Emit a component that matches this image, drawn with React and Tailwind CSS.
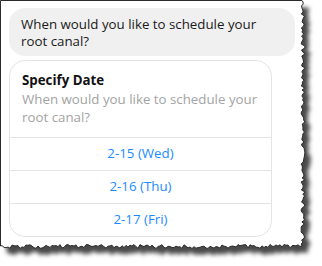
import { useMemo } from "react";

const dates = ["2-15 (Wed)", "2-16 (Thu)", "2-17 (Fri)"];

function rand(seed) {
  let s = seed;
  return () => {
    s = (s * 9301 + 49297) % 233280;
    return s / 233280;
  };
}

function tornPath() {
  const r = rand(7);
  const pts = ["M0.5 0.5", "L302 0.5"];
  for (let y = 2; y < 246; y += 2) {
    pts.push(`L${(301 + r() * 4).toFixed(1)} ${y}`);
  }
  for (let x = 302; x > 0; x -= 2) {
    pts.push(`L${x} ${(244.5 + r() * 4).toFixed(1)}`);
  }
  pts.push("L0.5 246", "Z");
  return pts.join(" ");
}

function TornFrame() {
  const d = useMemo(() => tornPath(), []);
  return (
    <svg className="absolute inset-0" width="322" height="266" viewBox="0 0 322 266">
      <defs>
        <filter id="blur" x="-10%" y="-10%" width="120%" height="120%">
          <feGaussianBlur stdDeviation="2" />
        </filter>
      </defs>
      <path d={d} transform="translate(6 7)" fill="#4a4a4a" filter="url(#blur)" />
      <path d={d} fill="#ffffff" stroke="#2b2b2b" strokeWidth="1" />
    </svg>
  );
}

export default function App() {
  return (
    <div
      className="relative w-[322px] h-[266px] bg-white overflow-hidden"
      style={{ fontFamily: '"Open Sans", "Noto Sans", sans-serif' }}
    >
      <TornFrame />
      <div className="relative pl-[9px] pt-[8px] text-[13.3px]">
        <div className="w-[286px] rounded-[16px] bg-[#f0f0f0] px-[12px] pt-[8px] pb-[6px] leading-[17px] text-[#1a1a1a]">
          When would you like to schedule your root canal?
        </div>

        <div className="mt-[4px] w-[263px] rounded-[16px] border border-[#e4e4e4] bg-white">
          <div className="px-[12px] pt-[9px] pb-[11px]">
            <div className="font-bold text-[#111] leading-[20px]">Specify Date</div>
            <div className="text-[#a3a3a3] leading-[18px]">
              When would you like to schedule your root canal?
            </div>
          </div>
          {dates.map((d) => (
            <div
              key={d}
              className="flex h-[33px] items-center justify-center border-t border-[#e4e4e4] text-[#1a8cff]"
            >
              {d}
            </div>
          ))}
        </div>
      </div>
    </div>
  );
}
